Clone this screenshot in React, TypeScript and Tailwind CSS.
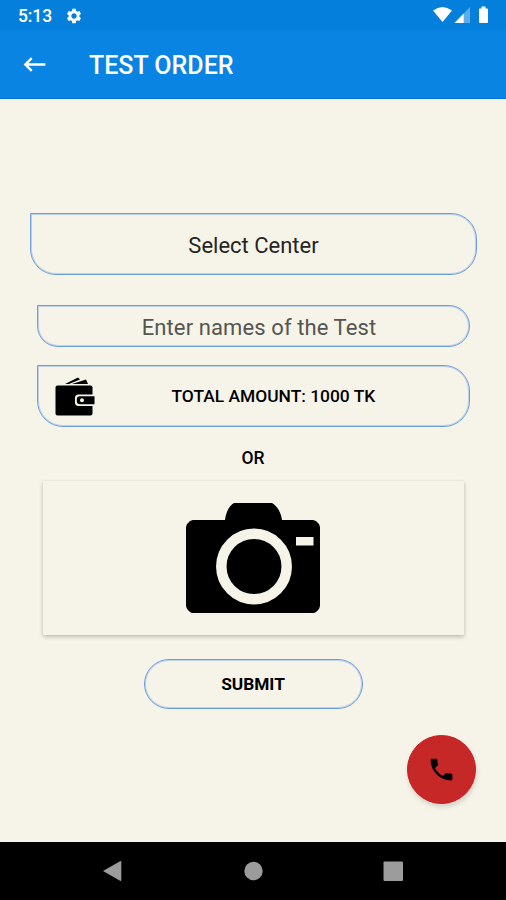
import type { ReactNode } from "react";
import { MdKeyboardBackspace, MdPhone, MdSettings } from "react-icons/md";

function StatusBar() {
  return (
    <div className="flex h-[30px] items-center justify-between bg-[#0480dc] pl-[18px] pr-4 text-white">
      <div className="flex items-center gap-[13px] pt-0.5">
        <span className="w-[34px] whitespace-nowrap text-[17.5px] font-medium leading-5 tracking-[-0.1px]">5:13</span>
        <MdSettings className="size-[18px]" />
      </div>
      <svg className="h-[18px] w-[58px]" viewBox="0 0 58 18" fill="currentColor" aria-hidden="true">
        <path d="M1 4.6Q10.5-2.400 20 4.600L10.500 16z" />
        <path d="M38 1v16H22.500z" opacity=".35" />
        <path d="M31.700 7.500V17H22.500z" />
        <path d="M49.500 0.500h4v2h1.500q1 0 1 1V16q0 1-1 1h-7q-1 0-1-1V3.500q0-1 1-1h1.500z" />
      </svg>
    </div>
  );
}

function Header() {
  return (
    <header className="flex h-[69px] items-center border-b border-[#0573dc] bg-[#0984e3] pl-5 text-white">
      <button type="button" aria-label="Back" className="flex pt-px">
        <MdKeyboardBackspace className="size-[29px]" />
      </button>
      <h1 className="ml-10 mt-[3px] whitespace-nowrap text-[25px] font-medium leading-8">TEST ORDER</h1>
    </header>
  );
}

function WalletIcon() {
  return (
    <svg className="h-[40px] w-[42px]" viewBox="0 0 42 40" aria-hidden="true">
      <path d="M11 8 24 1.500l2 2L15 8z" />
      <path d="M18 8 32 3.500 34 8z" />
      <rect x="1.500" y="9.500" width="37" height="30" rx="2" />
      <path d="M43 18.500H24.500q-3.500 0-3.500 3.500v4.500q0 3.500 3.500 3.500H43z" fill="#f6f4e8" />
      <path d="M38.500 20.200H26q-3.200 0-3.200 3.200v1.700q0 3.200 3.200 3.200h14.500v-8z" />
      <circle cx="28" cy="24.300" r="2" fill="#f6f4e8" />
    </svg>
  );
}

function CameraIcon() {
  return (
    <svg className="h-[110px] w-[136px]" viewBox="0 0 136 110" aria-hidden="true">
      <path d="M1 24l1-3 3-3 3-1h32c1-8 4-14 9-17h38c5 3 9 9 10 17h31l3 1 3 3 1 3v79l-1 3-3 3-2 1H7l-2-1-3-3-1-3z" />
      <circle cx="69" cy="63.500" r="32.700" fill="none" stroke="#f6f4e8" strokeWidth="10.500" />
      <path d="M111 34h17.500v8.500H111z" fill="#f6f4e8" />
    </svg>
  );
}

function NavBar() {
  return (
    <nav className="flex h-[58px] items-center justify-center bg-black">
      <svg className="h-[22px] w-[300px]" viewBox="0 0 300 22" fill="#9c9c9c" aria-hidden="true">
        <path d="M0 11 17.500 1q.8 0 .8 1v18q0 1-.8 1z" />
        <circle cx="150.500" cy="11" r="9.200" />
        <rect x="280.500" y="1.500" width="19.500" height="19.500" rx="1" />
      </svg>
    </nav>
  );
}

function Field({ className, children }: { className: string; children: ReactNode }) {
  return (
    <div
      className={`flex items-center justify-center border border-[#6c9ee2] shadow-[inset_0_0_0_1px_rgba(108,158,226,0.4)] ${className}`}
    >
      {children}
    </div>
  );
}

export default function App() {
  return (
    <div className="flex h-[900px] w-[506px] flex-col overflow-hidden bg-[#f6f4e8] font-[Roboto,sans-serif] text-black">
      <StatusBar />
      <Header />
      <main className="flex flex-1 flex-col items-center pt-[114px]">
        <Field className="ml-px h-[62px] w-[447px] rounded-[26px] rounded-tl-none pt-0.5 text-[22px] text-[#242422]">
          <span className="whitespace-nowrap">Select Center</span>
        </Field>
        <Field className="mt-[30px] h-[42px] w-[433px] rounded-[21px] rounded-tl-none pl-3 pt-0.5 text-[22px] text-[#555551]">
          <span className="whitespace-nowrap tracking-[0.1px]">Enter names of the Test</span>
        </Field>
        <Field className="mt-[18px] h-[62px] w-[433px] rounded-[26px] rounded-tl-none">
          <div className="flex w-full items-center pl-4">
            <WalletIcon />
            <span className="ml-[76px] whitespace-nowrap pt-px text-[17.400px] font-medium">TOTAL AMOUNT: 1000 TK</span>
          </div>
        </Field>
        <p className="mt-[19px] text-[17.500px] font-medium leading-6">OR</p>
        <button
          type="button"
          aria-label="Take photo"
          className="mt-[11px] flex h-[154px] w-[421px] items-center justify-center rounded-[1px] shadow-[0_2px_4px_rgba(0,0,0,0.22),0_0_2px_rgba(0,0,0,0.08)]"
        >
          <CameraIcon />
        </button>
        <button
          type="button"
          className="mt-[24px] flex h-[50px] w-[219px] items-center justify-center rounded-[25px] border border-[#6c9ee2] pt-0.5 text-[17.300px] font-bold shadow-[inset_0_0_0_1px_rgba(108,158,226,0.4)]"
        >
          SUBMIT
        </button>
        <button
          type="button"
          aria-label="Call"
          className="mr-[30px] mt-[26px] flex size-[69px] items-center justify-center self-end rounded-full border border-[#cd1820] bg-[#c62828] shadow-[1px_3px_5px_rgba(0,0,0,0.14)]"
        >
          <MdPhone className="size-[29px]" />
        </button>
      </main>
      <NavBar />
    </div>
  );
}
